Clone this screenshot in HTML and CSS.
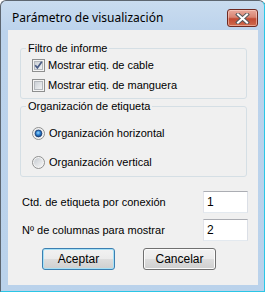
FILE: index.html
```html
<!DOCTYPE html>
<html lang="es">
<head>
    <meta charset="UTF-8">
    <title>Parámetro de visualización</title>
    <link rel="stylesheet" href="styles.css">
</head>
<body>
    <div class="window">
        <div class="titlebar">
            <span class="title">Parámetro de visualización</span>
            <div class="close">
                <svg width="17" height="11" viewBox="0 0 17 11">
                    <path d="M4 1.5 L13 9.5 M13 1.5 L4 9.5" stroke="#56585c" stroke-width="4" stroke-linecap="square"/>
                    <path d="M4 1.5 L13 9.5 M13 1.5 L4 9.5" stroke="#ffffff" stroke-width="2" stroke-linecap="square"/>
                </svg>
            </div>
        </div>

        <div class="client">
            <div class="group group-filter">
                <div class="group-title">Filtro de informe</div>
                <div class="option">
                    <svg class="box" width="13" height="13" viewBox="0 0 13 13">
                        <defs>
                            <linearGradient id="cb1" x1="0" y1="0" x2="1" y2="1">
                                <stop offset="0" stop-color="#c9ced4"/>
                                <stop offset="1" stop-color="#f4f5f6"/>
                            </linearGradient>
                        </defs>
                        <rect x="0.5" y="0.5" width="12" height="12" fill="#f4f4f4" stroke="#8e8f8f"/>
                        <rect x="2.5" y="2.5" width="8" height="8" fill="url(#cb1)" stroke="#b3b7bc"/>
                        <path d="M3.2 6.2 L5.4 8.8 L9.8 2.8" fill="none" stroke="#4a5d86" stroke-width="1.7"/>
                    </svg>
                    <span>Mostrar etiq. de cable</span>
                </div>
                <div class="option">
                    <svg class="box" width="13" height="13" viewBox="0 0 13 13">
                        <defs>
                            <linearGradient id="cb2" x1="0" y1="0" x2="1" y2="1">
                                <stop offset="0" stop-color="#c9ced4"/>
                                <stop offset="1" stop-color="#f4f5f6"/>
                            </linearGradient>
                        </defs>
                        <rect x="0.5" y="0.5" width="12" height="12" fill="#f4f4f4" stroke="#8e8f8f"/>
                        <rect x="2.5" y="2.5" width="8" height="8" fill="url(#cb2)" stroke="#b3b7bc"/>
                    </svg>
                    <span>Mostrar etiq. de manguera</span>
                </div>
            </div>

            <div class="group group-layout">
                <div class="group-title">Organización de etiqueta</div>
                <div class="radios">
                    <div class="option">
                        <svg class="box" width="13" height="13" viewBox="0 0 13 13">
                            <defs>
                                <linearGradient id="rb1" x1="0" y1="0" x2="1" y2="1">
                                    <stop offset="0" stop-color="#c6cbd1"/>
                                    <stop offset="1" stop-color="#f6f6f6"/>
                                </linearGradient>
                                <radialGradient id="dot1" cx="0.45" cy="0.4" r="0.6">
                                    <stop offset="0" stop-color="#9ad8ff"/>
                                    <stop offset="0.5" stop-color="#2e84d4"/>
                                    <stop offset="1" stop-color="#0f3f80"/>
                                </radialGradient>
                            </defs>
                            <circle cx="6.5" cy="6.5" r="6" fill="#f4f4f4" stroke="#8e8f8f"/>
                            <circle cx="6.5" cy="6.5" r="4.5" fill="url(#rb1)"/>
                            <circle cx="6.5" cy="6.5" r="3.4" fill="url(#dot1)" stroke="#1e3f73" stroke-width="0.8"/>
                        </svg>
                        <span>Organización horizontal</span>
                    </div>
                    <div class="option">
                        <svg class="box" width="13" height="13" viewBox="0 0 13 13">
                            <defs>
                                <linearGradient id="rb2" x1="0" y1="0" x2="1" y2="1">
                                    <stop offset="0" stop-color="#c6cbd1"/>
                                    <stop offset="1" stop-color="#f6f6f6"/>
                                </linearGradient>
                            </defs>
                            <circle cx="6.5" cy="6.5" r="6" fill="#f4f4f4" stroke="#8e8f8f"/>
                            <circle cx="6.5" cy="6.5" r="4.5" fill="url(#rb2)"/>
                        </svg>
                        <span>Organización vertical</span>
                    </div>
                </div>
            </div>

            <div class="fields">
                <div class="field">
                    <span>Ctd. de etiqueta por conexión</span>
                    <div class="textbox">1</div>
                </div>
                <div class="field">
                    <span>Nº de columnas para mostrar</span>
                    <div class="textbox">2</div>
                </div>
            </div>

            <div class="buttons">
                <div class="btn btn-default">Aceptar</div>
                <div class="btn">Cancelar</div>
            </div>
        </div>
    </div>
</body>
</html>
```

FILE: styles.css
```css
body {
    margin: 0;
    background: #ffffff;
    font-family: 'Liberation Sans', Arial, sans-serif;
    font-size: 11px;
    color: #000000;
}

/* Window frame */
.window {
    width: 265px;
    height: 292px;
    box-sizing: border-box;
    border: 1px solid #5d6670;
    border-right-color: #2ac6e6;
    border-bottom-color: #2ac6e6;
    border-radius: 6px 6px 0 0;
    padding: 0 6px 6px 7px;
    background: linear-gradient(180deg, #c9dcef 0%, #bcd3ec 30px, #bad2eb 100%);
    display: flex;
    flex-direction: column;
    box-shadow: 1px 1px 0 #000000;
}

.titlebar {
    height: 29px;
    display: flex;
    justify-content: space-between;
    align-items: flex-start;
}

.title {
    font-family: 'Noto Sans', 'Open Sans', sans-serif;
    font-size: 12px;
    padding: 9px 0 0 4px;
    line-height: 16px;
    color: #000000;
}

.close {
    margin-top: 8px;
    width: 31px;
    height: 18px;
    box-sizing: border-box;
    border: 1px solid #6e2a22;
    border-radius: 3px;
    background: linear-gradient(180deg, #e9a99c 0%, #d88472 45%, #c24a33 55%, #cf6a4d 100%);
    box-shadow: inset 0 0 0 1px rgba(255, 220, 210, 0.5);
    display: flex;
    align-items: center;
    justify-content: center;
}

/* Client area */
.client {
    flex: 1;
    background: #f0f0f0;
    padding: 18px 11px 0 12px;
    display: flex;
    flex-direction: column;
}

.group {
    border: 1px solid #d5dfe5;
    border-radius: 3px;
    padding: 0 0 3px 11px;
}

.group-title {
    width: fit-content;
    margin: -7px 0 0 -6px;
    padding: 0 2px;
    line-height: 13px;
    background: #f0f0f0;
}

.option {
    height: 20px;
    display: flex;
    align-items: center;
    gap: 3px;
}

.group-layout {
    margin-top: 7px;
    padding-bottom: 4px;
}

.radios {
    padding-top: 10px;
    display: flex;
    flex-direction: column;
    gap: 9px;
}

.group-layout .option {
    gap: 4px;
}

/* Numeric fields */
.fields {
    margin: 14px -1px 0 2px;
    display: flex;
    flex-direction: column;
    gap: 6px;
}

.field {
    display: flex;
    justify-content: space-between;
    align-items: center;
}

.textbox {
    width: 45px;
    height: 22px;
    box-sizing: border-box;
    padding: 3px 0 0 3px;
    font-size: 12px;
    background: #ffffff;
    border: 1px solid #e2e3ea;
    border-top-color: #abadb3;
    border-right-color: #dbdfe6;
    border-bottom-color: #e3e9ef;
}

/* Buttons */
.buttons {
    margin-top: 7px;
    padding-left: 22px;
    display: flex;
    gap: 28px;
}

.btn {
    width: 73px;
    height: 22px;
    box-sizing: border-box;
    border: 1px solid #707070;
    border-radius: 3px;
    background: linear-gradient(180deg, #f2f2f2 0%, #ebebeb 50%, #dddddd 51%, #cfcfcf 100%);
    box-shadow: inset 0 0 0 1px #fcfcfc;
    display: flex;
    align-items: center;
    justify-content: center;
    font-size: 12px;
}

.btn-default {
    border-color: #3c7fb1;
    box-shadow: inset 0 0 0 1px #a6e1f7;
}
```
